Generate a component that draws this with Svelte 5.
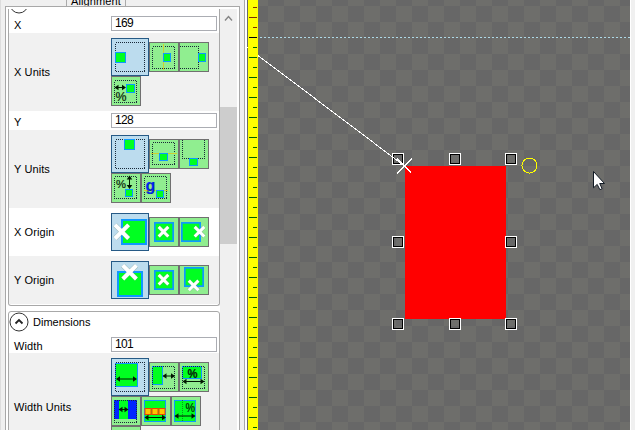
<script>
  const ticks = Array.from({ length: 43 }, (_, i) => {
    const y = 7 + i * 10;
    return { y, long: i % 2 === 1, color: y < 37 ? '#7c3000' : y === 37 ? '#000' : '#006000' };
  });
  const handles = [
    [392, 153], [449, 153], [505, 153],
    [392, 236], [505, 236],
    [392, 318], [449, 318], [505, 318]
  ];
</script>

{#snippet frame(a, b, s)}
  <rect class="dots" x={a + 0.5} y={b + 0.5} width={s} height={s} />
{/snippet}

{#snippet box(x, y, w, h, t = 1)}
  <rect x={x + t / 2} y={y + t / 2} width={w - t} height={h - t} fill="#00ff21" stroke="#0f98ff" stroke-width={t} />
{/snippet}

{#snippet cross(cx, cy, r, t)}
  <path d="M{cx - r} {cy - r}L{cx + r} {cy + r}M{cx + r} {cy - r}L{cx - r} {cy + r}" stroke="#7d9c88" stroke-opacity=".5" stroke-width={t + 1} />
  <path d="M{cx - r} {cy - r}L{cx + r} {cy + r}M{cx + r} {cy - r}L{cx - r} {cy + r}" stroke="#fff" stroke-width={t} />
{/snippet}

{#snippet harrow(x1, x2, y)}
  <path d="M{x1 + 1} {y}H{x2 - 1}" stroke="#001800" stroke-width="1.2" />
  <path d="M{x1} {y}l4-2.8v5.6zM{x2} {y}l-4-2.8v5.6z" fill="#001800" />
{/snippet}

{#snippet big(art)}
  <button class="big" aria-label="option"><svg width="36" height="36" viewBox="1 1 36 36">{@render art()}</svg></button>
{/snippet}
{#snippet small(art)}
  <button aria-label="option"><svg width="28" height="28" viewBox="1 1 28 28">{@render art()}</svg></button>
{/snippet}

{#snippet xLeft()}{@render frame(4, 4, 29)}{@render box(4, 14, 11, 11)}{/snippet}
{#snippet xCenter()}{@render frame(3, 4, 22)}<path d="M14.5 2V28" stroke="#cfd030" />{@render box(14, 11, 8, 9)}{/snippet}
{#snippet xRight()}<path class="dots" d="M1 4.5H19.5V26.5H1" />{@render box(19, 11, 8, 9)}{/snippet}
{#snippet xPercent()}
  {@render frame(3, 4, 22)}{@render box(15, 8, 9, 9)}{@render harrow(3.5, 15, 11.5)}
  <text x="4.5" y="25" font-size="13" textLength="11" lengthAdjust="spacingAndGlyphs">%</text>
{/snippet}

{#snippet yTop()}{@render frame(4, 4, 29)}{@render box(13, 4, 11, 11)}{/snippet}
{#snippet yCenter()}{@render frame(3, 3, 22)}<path d="M2 14.5H28" stroke="#cfd030" />{@render box(10, 14, 9, 8)}{/snippet}
{#snippet yBottom()}<path class="dots" d="M3.5 1V19.5H25.5V1" />{@render box(10, 19, 9, 8)}{/snippet}
{#snippet yPercent()}
  {@render frame(3, 3, 22)}{@render box(14, 16, 8, 8)}
  <text x="5" y="15" font-size="11.5" textLength="10" lengthAdjust="spacingAndGlyphs">%</text>
  <path d="M18.5 4V15" stroke="#001800" /><path d="M18.5 2.5l-2.8 4h5.6zM18.5 16l-2.8-4h5.6z" fill="#001800" />
{/snippet}
{#snippet yBaseline()}
  {@render frame(3, 3, 22)}<path d="M3 17.5H27" stroke="#cfd030" />{@render box(15, 17, 8, 8)}
  <text x="4.5" y="18" font-size="16" font-weight="bold" style:fill="#0026ff">g</text>
{/snippet}

{#snippet oxLeft()}{@render box(10, 6, 26, 26, 2)}{@render cross(10.8, 18.7, 6.8, 4)}{/snippet}
{#snippet oCenter()}{@render box(5, 5, 20, 20, 1.7)}{@render cross(14.5, 14.7, 4.8, 3)}{/snippet}
{#snippet oxRight()}{@render box(2, 5, 20, 20, 1.7)}{@render cross(20.5, 14.7, 4.8, 3)}{/snippet}
{#snippet oyTop()}{@render box(6, 10, 26, 26, 2)}{@render cross(18.6, 11.2, 6.8, 4)}{/snippet}
{#snippet oyBottom()}{@render box(5, 2, 20, 20, 1.7)}{@render cross(14.6, 20.4, 4.8, 3)}{/snippet}

{#snippet wAbsolute()}{@render box(4, 5, 23, 24)}{@render frame(4, 4, 29)}{@render harrow(5, 26, 21)}{/snippet}
{#snippet wRelative()}{@render box(3, 4, 11, 19)}{@render frame(3, 4, 22)}{@render harrow(13.5, 26, 14)}{/snippet}
{#snippet wPercent()}
  {@render box(3, 4, 20, 13)}{@render frame(3, 4, 22)}{@render harrow(3.5, 25.5, 19.5)}
  <text x="8.5" y="15.5" font-size="12" font-weight="bold" textLength="10" lengthAdjust="spacingAndGlyphs">%</text>
{/snippet}
{#snippet wRatio()}
  <path d="M3 4h23v19H3z" fill="#0026ff" /><path d="M8 4h9v19H8z" fill="#00ff21" />
  {@render frame(3, 4, 22)}{@render harrow(7.5, 17.5, 13.5)}
{/snippet}
{#snippet wChildren()}
  {@render box(3, 4, 22, 22)}
  {#each [4, 11, 18] as x}<rect x={x} y="12.5" width="6" height="6" fill="#ffc400" stroke="#f04000" />{/each}
  {@render harrow(3.5, 25, 21.5)}
{/snippet}
{#snippet wFile()}
  {@render box(3, 4, 22, 22)}<path class="dots" d="M11.5 4V26" style:stroke="#109020" />
  <text x="14.5" y="15.5" font-size="12" textLength="9.5" lengthAdjust="spacingAndGlyphs">%</text>{@render harrow(3.5, 24.5, 20)}
{/snippet}
{#snippet wMore()}{@render frame(3, 4, 22)}{/snippet}

{#snippet chevron()}
  <svg class="chev" width="20" height="20"><circle cx="10" cy="10" r="9" fill="#fff" stroke="#333" /><path d="M6.5 11.5L10 8l3.5 3.5" fill="none" stroke="#222" stroke-width="1.8" /></svg>
{/snippet}

<main>
  <aside>
    <div class="tabs"><span class="tab">Alignment</span></div>
    <div class="page">
      <div class="groups">
        <section class="group first">
          <div class="peek">{@render chevron()}</div>
          <div class="row value"><span class="label">X</span><span class="field">169</span></div>
          <div class="row units"><span class="label">X Units</span>
            <div class="opts">{@render big(xLeft)}{@render small(xCenter)}{@render small(xRight)}{@render small(xPercent)}</div></div>
          <div class="row value"><span class="label">Y</span><span class="field">128</span></div>
          <div class="row units"><span class="label">Y Units</span>
            <div class="opts">{@render big(yTop)}{@render small(yCenter)}{@render small(yBottom)}{@render small(yPercent)}{@render small(yBaseline)}</div></div>
          <div class="row origin"><span class="label">X Origin</span>
            <div class="opts">{@render big(oxLeft)}{@render small(oCenter)}{@render small(oxRight)}</div></div>
          <div class="row origin gray"><span class="label">Y Origin</span>
            <div class="opts">{@render big(oyTop)}{@render small(oCenter)}{@render small(oyBottom)}</div></div>
        </section>
        <section class="group second">
          <header>{@render chevron()}<span>Dimensions</span></header>
          <div class="row value"><span class="label">Width</span><span class="field">101</span></div>
          <div class="row units tall"><span class="label">Width Units</span>
            <div class="opts">{@render big(wAbsolute)}{@render small(wRelative)}{@render small(wPercent)}{@render small(wRatio)}{@render small(wChildren)}{@render small(wFile)}{@render small(wMore)}</div></div>
        </section>
      </div>
      <div class="scroll">
        <svg width="17" height="20"><path d="M5 11.5L8.5 7.5L12 11.5" fill="none" stroke="#858585" stroke-width="1.4" /></svg>
        <div class="thumb"></div>
      </div>
    </div>
  </aside>

  <div class="splitter"></div>

  <svg class="canvas" width="388" height="430" viewBox="247 0 388 430">
    <defs>
      <pattern id="checks" x="268" y="6" width="32" height="32" patternUnits="userSpaceOnUse">
        <path d="M0 0h32v32H0z" fill="#676767" /><path d="M0 0h16v16H0zM16 16h16v16H16z" fill="#6e6e6b" />
      </pattern>
    </defs>
    <g shape-rendering="crispEdges">
      <path d="M247 0h1v430h-1z" fill="#696969" />
      <path d="M247 47h1v1h-1z" fill="#fff" />
      <path d="M248 0h10v430h-10z" fill="#ff0" />
      <path d="M258 0h372v430H258z" fill="url(#checks)" />
      <path d="M630 0h1v430h-1z" fill="#fff" /><path d="M631 0h4v430h-4z" fill="#f0f0f0" />
      {#each ticks as t}
        <rect x={t.long ? 249 : 253} y={t.y} width={t.long ? 8 : 4} height="1" fill={t.color} />
      {/each}
      <path d="M260 37.5H630" stroke="#add8e6" stroke-dasharray="2 2" />
      <path d="M405 166h101v153H405z" fill="#f00" />
      {#each handles as [x, y]}
        <rect x={x + 0.5} y={y + 0.5} width="11" height="11" fill="none" stroke="#fff" />
        <rect x={x + 1.5} y={y + 1.5} width="9" height="9" fill="none" stroke="#000" />
      {/each}
      <path d="M258 55.5L404.5 166M397 173.5L412 158.5M397 158.5L411 172.5" stroke="#fff" />
      <circle cx="529.5" cy="165.5" r="7.5" fill="none" stroke="#ff0" />
    </g>
    <path d="M593.5 171.5v16.3l3.7-3.4 2.7 5.3 2.2-1-2.4-5.2h4.8z" fill="#fff" stroke="#111a24" />
  </svg>
</main>

<style>
  :global(body) { margin: 0; overflow: hidden; }
  main { display: flex; width: 635px; height: 430px; overflow: hidden; background: #f0f0f0; font: 11px/14px "Liberation Sans", Arial, sans-serif; color: #000; }
  aside { width: 240px; height: 430px; display: flex; flex-direction: column; flex: none; border-left: 1px solid #ddd; box-sizing: border-box; }
  .tabs { height: 6px; display: flex; padding-left: 65px; flex: none; }
  .tab { width: 58px; height: 6px; line-height: 10px; border: 1px solid #aaa; border-top: 0; display: flex; align-items: flex-end; justify-content: center; letter-spacing: .1px; }
  .page { flex: 1; min-height: 0; margin-left: 4px; border: 1px solid #a8a8a8; border-bottom: 0; background: #fff; display: flex; padding: 2px 2px 0; }
  .groups { width: 212px; flex: none; overflow: hidden; }
  .group { box-sizing: border-box; border: 1px solid #a8a8a8; border-radius: 3px; overflow: hidden; background: #fff; }
  .first { border-top: 0; height: 297px; border-radius: 0 0 3px 3px; }
  .second { margin-top: 5px; height: 150px; }
  .peek { height: 5px; display: flex; align-items: flex-end; }
  .row { display: flex; align-items: center; padding-left: 5px; }
  .label { width: 97px; flex: none; letter-spacing: .1px; }
  .value { height: 19px; box-sizing: border-box; }
  .value .label { padding-top: 3px; }
  .field { width: 98px; height: 13px; line-height: 13px; padding: 0 3px; border: 1px solid #abadb3; background: #fff; font-size: 12px; letter-spacing: -.7px; }
  .units { height: 78px; background: #f1f1f1; }
  .units.tall { height: 108px; }
  .origin { height: 48px; }
  .gray { background: #f1f1f1; }
  .opts { display: flex; flex-wrap: wrap; align-items: center; width: 107px; }
  button { width: 30px; height: 30px; padding: 0; border: 1px solid #707070; background: #90ee90; display: flex; box-sizing: border-box; }
  button.big { width: 38px; height: 38px; background: #bcdcee; border-color: #265a86; }
  button svg { display: block; }
  .dots { fill: none; stroke: #182838; stroke-width: 1; stroke-dasharray: 1 1; shape-rendering: crispEdges; }
  text { fill: #081c08; stroke: #081c08; stroke-width: .2; font-family: "Liberation Sans", Arial, sans-serif; }
  .chev { display: block; flex: none; }
  header { display: flex; align-items: center; height: 20px; gap: 4px; }
  .second .value { height: 21px; padding-top: 3px; }
  .scroll { width: 17px; background: #f0f0f0; display: flex; flex-direction: column; }
  .scroll svg { display: block; height: 98px; flex: none; }
  .thumb { height: 137px; background: #cdcdcd; }
  .splitter { width: 7px; box-sizing: border-box; border-right: 2px solid #fff; box-shadow: inset -1px 0 #a8a8a8; background: #f0f0f0; flex: none; }
  .canvas { display: block; flex: none; }
</style>
